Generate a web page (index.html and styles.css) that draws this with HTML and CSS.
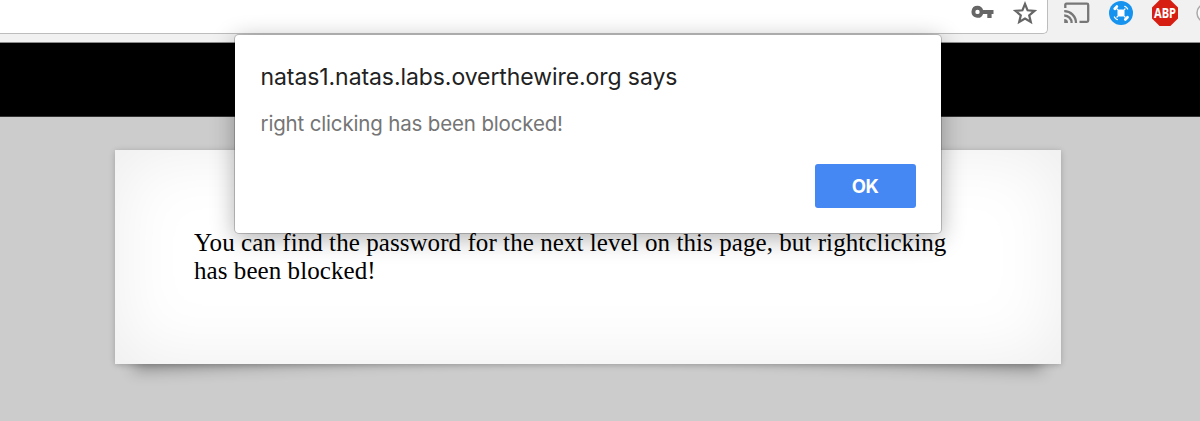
FILE: index.html
```html
<!DOCTYPE html>
<html lang="en">
<head>
<meta charset="utf-8">
<title>natas1</title>
<link rel="stylesheet" href="styles.css">
</head>
<body>
<header class="toolbar">
  <div class="omnibox">
    <svg class="key" width="24" height="14" viewBox="0 0 24 14"><path fill="#666" fill-rule="evenodd" d="M6.500 0.700a6 6 0 1 0 5.600 8.200h4.200v4.100h4.300v-4.100h1.900V5h-10.400A6 6 0 0 0 6.500.7zm0 4a2.200 2.200 0 1 1 0 4.400 2.200 2.200 0 0 1 0-4.400z"/></svg>
    <svg class="star" width="24" height="24" viewBox="0 0 24 24"><path fill="none" stroke="#666" stroke-width="2.200" d="M12 3l2.600 6.300 6.800.6-5.200 4.400 1.600 6.700-5.800-3.500L6.200 21l1.600-6.700-5.200-4.400 6.800-.6z"/></svg>
  </div>
  <div class="extensions">
    <svg width="27" height="22" viewBox="0 0 27 22"><g fill="none" stroke="#777" stroke-width="2.300"><path d="M1.300 6V2.700Q1.300 1.700 2.300 1.700H23Q24.200 1.700 24.200 2.900V18.600Q24.200 19.800 23 19.800H15.500"/><path d="M.2 9.200A11.700 11.700 0 0 1 12 21M.2 13.500A7.300 7.300 0 0 1 7.600 21"/></g><path fill="#777" d="M.2 17.100A3.800 3.800 0 0 1 4 21H.2z"/></svg>
    <svg width="24" height="24" viewBox="0 0 24 24"><circle cx="12" cy="12" r="12" fill="#1693ef"/><rect x="8.500" y="8.500" width="7" height="7" rx="2" fill="#fff"/><g stroke="#fff" stroke-linecap="round" fill="none"><path stroke-width="2.800" d="M5.800 7.700l2-2.100M16.300 18.400l2.200-2.100"/><path stroke-width="1.300" d="M15.800 5.400q2 .7 2.800 2.600M5.400 16q.9 1.900 2.900 2.600"/><path stroke-width="1.200" d="M8 8l8 8M16 8l-8 8"/></g></svg>
    <svg class="abp" width="26" height="26" viewBox="0 0 26 26"><path fill="#d71e12" d="M7.600 0h10.800L26 7.600v10.800L18.400 26H7.600L0 18.400V7.600z"/><text x="13" y="17.800" text-anchor="middle" textLength="22" lengthAdjust="spacingAndGlyphs">ABP</text></svg>
    <svg width="26" height="22" viewBox="0 0 26 22"><circle cx="10" cy="11" r="9" fill="#fafafa" stroke="#aaa" stroke-width="1.500"/></svg>
  </div>
</header>
<div class="banner"></div>
<main class="page">
  <div class="sheet">
    <div class="content"><p class="line first">You can find the password for the next level on this page, but rightclicking</p><p class="line second">has been blocked!</p></div>
  </div>
</main>
<div class="dialog">
  <h1 class="title">natas1.natas.labs.overthewire.org says</h1>
  <p class="message">right clicking has been blocked!</p>
  <button class="ok">OK</button>
</div>
</body>
</html>
```

FILE: styles.css
```css
* { box-sizing: border-box; }
body { margin: 0; height: 421px; overflow: hidden; background: #ccc; font-family: Inter, sans-serif; }
.toolbar { height: 43px; background: #f1f1f1; border-bottom: 1px solid #8d8d8d; display: flex; align-items: flex-start; overflow: hidden; }
.omnibox { flex: 0 0 1048px; height: 34px; background: #fff; border: 1px solid #bdbdbd; border-width: 0 1px 1px 0; border-bottom-right-radius: 5px; display: flex; justify-content: flex-end; padding-right: 10px; gap: 18px; }
.key { margin-top: 5px; }
.star { margin-top: 1px; }
.extensions { display: flex; flex: none; padding: 2px 0 0 16px; }
.extensions svg { margin-right: 18px; flex: none; }
.extensions svg:nth-child(2) { margin-top: -1px; }
.extensions .abp { margin: -2px 18px 0 1px; overflow: visible; }
.abp text { font: bold 13.500px "Noto Sans", sans-serif; fill: #fff; }
.banner { height: 74px; background: #000; border-bottom: 1px solid #333; }
.page { position: relative; z-index: 0; padding: 33px 0 0 115px; }
.sheet { position: relative; width: 946px; height: 214px; background: #fff; box-shadow: 0 1px 6px rgba(0,0,0,.22), inset 0 0 72px rgba(0,0,0,.08); }
.sheet::before, .sheet::after { content: ""; position: absolute; z-index: -1; bottom: 20px; width: 50%; height: 36px; box-shadow: 0 16px 16px rgba(0,0,0,.32); }
.sheet::before { left: 23px; transform: skew(-8deg) rotate(-2.500deg); }
.sheet::after { right: 23px; transform: skew(8deg) rotate(2.500deg); }
.content { padding: 79px 0 0 79px; }
.line { margin: 0; font: 25px/28px "Liberation Serif", serif; letter-spacing: .066px; color: #000; white-space: nowrap; font-variant-ligatures: common-ligatures; }
.dialog { position: absolute; z-index: 2; left: 235px; top: 35px; width: 706px; height: 198px; padding: 26px 25px 25px 25.500px; background: #fff; border-radius: 4px; box-shadow: 0 0 0 1px rgba(0,0,0,.2), 0 5px 24px rgba(0,0,0,.32); display: flex; flex-direction: column; }
.title { margin: 0; font-size: 23px; line-height: 32px; font-weight: 400; letter-spacing: -.08px; color: #222; white-space: nowrap; }
.message { margin: 17px 0 0; font-size: 20.500px; line-height: 28px; letter-spacing: -.16px; color: #757575; white-space: nowrap; }
.ok { margin: auto 0 0 auto; width: 101px; height: 44px; border: 0; border-radius: 3px; background: #4587f3; color: #fff; font: 700 18.500px Inter, sans-serif; letter-spacing: -.5px; padding: 0 1px 1px 0; }
```
